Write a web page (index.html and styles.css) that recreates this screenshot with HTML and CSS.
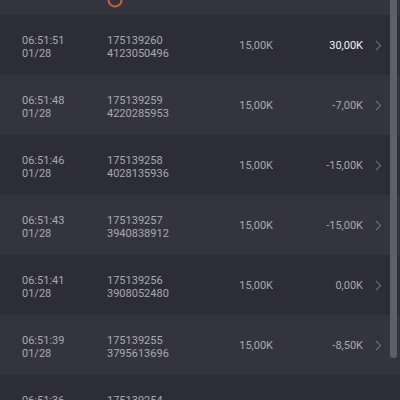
FILE: index.html
```html
<!DOCTYPE html>
<html lang="en">
<head>
  <meta charset="UTF-8">
  <meta name="viewport" content="width=device-width, initial-scale=1.0">
  <title>Trade History</title>
  <link rel="stylesheet" href="styles.css">
</head>
<body>
  <div class="history">
    <div class="loader">
      <svg class="spinner" width="20" height="20" viewBox="0 0 20 20">
        <circle cx="10" cy="10" r="6.5" fill="none" stroke="#c8603c" stroke-width="2" stroke-dasharray="32 9" stroke-linecap="round" transform="rotate(-40 10 10)"/>
      </svg>
    </div>

    <div class="row">
      <div class="cell two-line">06:51:51<br>01/28</div>
      <div class="cell two-line">175139260<br>4123050496</div>
      <div class="cell amount">15,00K</div>
      <div class="cell result win">30,00K</div>
      <div class="chevron"><svg width="7" height="11" viewBox="0 0 7 11"><path d="M1 0.8 L5.6 5.5 L1 10.2" fill="none" stroke="#6f707a" stroke-width="1.1"/></svg></div>
    </div>
    <div class="row">
      <div class="cell two-line">06:51:48<br>01/28</div>
      <div class="cell two-line">175139259<br>4220285953</div>
      <div class="cell amount">15,00K</div>
      <div class="cell result">-7,00K</div>
      <div class="chevron"><svg width="7" height="11" viewBox="0 0 7 11"><path d="M1 0.8 L5.6 5.5 L1 10.2" fill="none" stroke="#6f707a" stroke-width="1.1"/></svg></div>
    </div>
    <div class="row">
      <div class="cell two-line">06:51:46<br>01/28</div>
      <div class="cell two-line">175139258<br>4028135936</div>
      <div class="cell amount">15,00K</div>
      <div class="cell result">-15,00K</div>
      <div class="chevron"><svg width="7" height="11" viewBox="0 0 7 11"><path d="M1 0.8 L5.6 5.5 L1 10.2" fill="none" stroke="#6f707a" stroke-width="1.1"/></svg></div>
    </div>
    <div class="row">
      <div class="cell two-line">06:51:43<br>01/28</div>
      <div class="cell two-line">175139257<br>3940838912</div>
      <div class="cell amount">15,00K</div>
      <div class="cell result">-15,00K</div>
      <div class="chevron"><svg width="7" height="11" viewBox="0 0 7 11"><path d="M1 0.8 L5.6 5.5 L1 10.2" fill="none" stroke="#6f707a" stroke-width="1.1"/></svg></div>
    </div>
    <div class="row">
      <div class="cell two-line">06:51:41<br>01/28</div>
      <div class="cell two-line">175139256<br>3908052480</div>
      <div class="cell amount">15,00K</div>
      <div class="cell result">0,00K</div>
      <div class="chevron"><svg width="7" height="11" viewBox="0 0 7 11"><path d="M1 0.8 L5.6 5.5 L1 10.2" fill="none" stroke="#6f707a" stroke-width="1.1"/></svg></div>
    </div>
    <div class="row">
      <div class="cell two-line">06:51:39<br>01/28</div>
      <div class="cell two-line">175139255<br>3795613696</div>
      <div class="cell amount">15,00K</div>
      <div class="cell result">-8,50K</div>
      <div class="chevron"><svg width="7" height="11" viewBox="0 0 7 11"><path d="M1 0.8 L5.6 5.5 L1 10.2" fill="none" stroke="#6f707a" stroke-width="1.1"/></svg></div>
    </div>
    <div class="row">
      <div class="cell two-line">06:51:36<br>01/28</div>
      <div class="cell two-line">175139254<br>3711402752</div>
      <div class="cell amount">15,00K</div>
      <div class="cell result">-15,00K</div>
      <div class="chevron"><svg width="7" height="11" viewBox="0 0 7 11"><path d="M1 0.8 L5.6 5.5 L1 10.2" fill="none" stroke="#6f707a" stroke-width="1.1"/></svg></div>
    </div>

    <span class="scroll-thumb"></span>
  </div>
</body>
</html>
```

FILE: styles.css
```css
html, body {
  margin: 0;
  height: 100%;
  overflow: hidden;
  background: #33343e;
}
.history {
  position: relative;
  height: 400px;
  overflow: hidden;
  font-family: Roboto, "Liberation Sans", sans-serif;
  font-size: 11px;
  line-height: 13px;
  color: #a9a9b0;
}
.loader {
  height: 15px;
  background: #33343e;
  overflow: hidden;
  position: relative;
}
.spinner {
  position: absolute;
  left: 105px;
  top: -10px;
}
.row {
  height: 60px;
  display: grid;
  grid-template-columns: 85px 112px 54px 90px 1fr;
  align-items: center;
  padding-left: 22px;
  background: #2c2d37;
}
.row:nth-of-type(odd) {
  background: #33343e;
}
.two-line {
  padding-top: 3px;
}
.amount,
.result {
  text-align: right;
}
.result.win {
  color: #f4f4f6;
}
.chevron {
  padding-left: 12px;
  display: flex;
  align-items: center;
}
.scroll-thumb {
  position: absolute;
  z-index: 2;
  top: 0;
  left: 390px;
  width: 7px;
  height: 358px;
  background: #5e5f67;
  border-radius: 0 0 4px 4px;
}
```
